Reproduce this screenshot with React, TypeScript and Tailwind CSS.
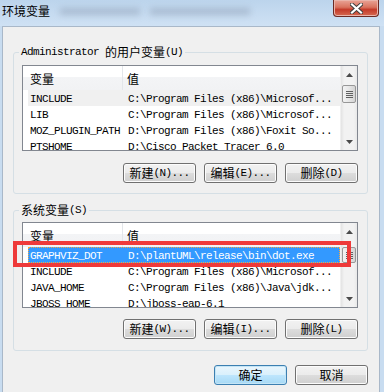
import React from "react";

const mono = "font-['Liberation_Mono',monospace] text-[11px] tracking-[-0.6px] whitespace-pre";
const cjk = "font-['Noto_Sans_CJK_SC',sans-serif] text-[12px]";

function Txt({ s }: { s: string }) {
    const runs = s.match(/[\x00-\x7f]+|[^\x00-\x7f]+/g) || [];
    return (
        <>
            {runs.map((r, i) => (
                <span key={i} className={/^[\x00-\x7f]/.test(r) ? mono : cjk}>{r}</span>
            ))}
        </>
    );
}

function Btn({ label, focus }: { label: string; focus?: boolean }) {
    return (
        <div
            className={`w-[73px] h-[20px] rounded-[3px] border flex items-center justify-center leading-none text-black ${focus
                ? "border-[#3c7fb1] bg-[linear-gradient(#eaf6fd_0%,#d9f0fc_50%,#bee6fd_50%,#a7d9f5_100%)] shadow-[inset_0_0_0_1px_#c4e5f6]"
                : "border-[#707070] bg-[linear-gradient(#f2f2f2_0%,#ebebeb_50%,#dddddd_50%,#cfcfcf_100%)] shadow-[inset_0_0_0_1px_#fcfcfc]"
                }`}
        >
            <Txt s={label} />
        </div>
    );
}

function Arrow({ down }: { down?: boolean }) {
    return (
        <div className="h-[17px] shrink-0 flex items-center justify-center">
            <svg width="7" height="4" viewBox="0 0 7 4">
                <path d={down ? "M0 0H7L3.5 4Z" : "M0 4H7L3.5 0Z"} fill="#4a4a4a" />
            </svg>
        </div>
    );
}

function ScrollBar({ gap, thumb }: { gap: number; thumb: number }) {
    return (
        <div className="w-[17px] h-full shrink-0 flex flex-col bg-[linear-gradient(90deg,#e3e3e3,#f2f2f2_20%,#f2f2f2_80%,#e8e8e8)] border-l border-[#f0f0f0]">
            <Arrow />
            <div style={{ height: gap }} className="shrink-0" />
            <div
                style={{ height: thumb }}
                className="shrink-0 mx-[1px] rounded-[2px] border border-[#979797] bg-[linear-gradient(90deg,#f3f3f3,#e6e6e6_50%,#d4d4d4)] flex flex-col items-center justify-center gap-[1px]"
            >
                <div className="w-[7px] h-[1px] bg-[#606060]" />
                <div className="w-[7px] h-[1px] bg-[#606060]" />
                <div className="w-[7px] h-[1px] bg-[#606060]" />
                <div className="w-[7px] h-[1px] bg-[#606060]" />
            </div>
            <div className="flex-1" />
            <Arrow down />
        </div>
    );
}

type Row = { name: string; value: string; sel?: boolean; inactive?: boolean };

function ListBox({ rows, gap, thumb }: { rows: Row[]; gap: number; thumb: number }) {
    return (
        <div className="w-[336px] h-[86px] border border-[#828790] bg-white flex overflow-hidden">
            <div className="flex-1 flex flex-col overflow-hidden">
                <div className="h-[24px] shrink-0 flex items-center leading-none bg-[linear-gradient(#ffffff_0%,#ffffff_45%,#f3f4f6_46%,#f1f2f4_100%)]">
                    <div className="w-[100px] h-full pl-[7px] pt-[2px] flex items-center border-r border-[#e3e6ea]">
                        <Txt s="变量" />
                    </div>
                    <div className="pl-[4px] pt-[2px]">
                        <Txt s="值" />
                    </div>
                </div>
                {rows.map((r) => (
                    <div key={r.name} className="h-[16px] shrink-0 flex pl-[5px]">
                        <div
                            className={`flex-1 flex items-center leading-none ${r.sel
                                ? "bg-[#3399ff] text-white outline-1 outline-dotted outline-[#f5a742] -outline-offset-1"
                                : r.inactive
                                    ? "bg-[#f0f0f0] text-black"
                                    : "text-black"
                                }`}
                        >
                            <div className="w-[95px] pl-[2px]">
                                <Txt s={r.name} />
                            </div>
                            <div className="pl-[5px] whitespace-nowrap">
                                <Txt s={r.value} />
                            </div>
                        </div>
                    </div>
                ))}
            </div>
            <ScrollBar gap={gap} thumb={thumb} />
        </div>
    );
}

const userRows: Row[] = [
    { name: "INCLUDE", value: "C:\\Program Files (x86)\\Microsof...", inactive: true },
    { name: "LIB", value: "C:\\Program Files (x86)\\Microsof..." },
    { name: "MOZ_PLUGIN_PATH", value: "D:\\Program Files (x86)\\Foxit So..." },
    { name: "PTSHOME", value: "D:\\Cisco Packet Tracer 6.0" },
];

const sysRows: Row[] = [
    { name: "GRAPHVIZ_DOT", value: "D:\\plantUML\\release\\bin\\dot.exe", sel: true },
    { name: "INCLUDE", value: "C:\\Program Files (x86)\\Microsof..." },
    { name: "JAVA_HOME", value: "C:\\Program Files (x86)\\Java\\jdk..." },
    { name: "JBOSS_HOME", value: "D:\\jboss-eap-6.1" },
];

export default function App() {
    return (
        <div className="w-[384px] h-[392px] overflow-hidden flex flex-col bg-[#c8dcf0] text-black text-[12px] leading-none font-['Noto_Sans_CJK_SC',sans-serif]">
            {/* title bar */}
            <div className="h-[26px] shrink-0 flex items-start bg-[linear-gradient(#bcd4ec,#cfe1f4)]">
                <div className="pl-[2px] pt-[4px] h-[18px] flex items-center text-black">
                    <Txt s="环境变量" />
                </div>
                <div className="ml-[10px] mt-[8px] w-[80px] h-[7px] bg-[#7f8fa6]/40 blur-[3px]" />
                <div className="ml-[10px] mt-[8px] w-[100px] h-[7px] bg-[#7f8fa6]/40 blur-[3px]" />
                <div className="flex-1" />
                <div className="mr-[5px] w-[46px] h-[17px] rounded-b-[4px] border border-t-0 border-[#6b2a24] bg-[linear-gradient(#e9a497_0%,#d9735f_45%,#c43b2a_60%,#d66a52_100%)] flex items-center justify-center shadow-[inset_0_0_0_1px_#eab4aa]">
                    <svg width="13" height="11" viewBox="0 0 13 11">
                        <path d="M2 1.5L11 9.5M11 1.5L2 9.5" stroke="#3d3d3d" strokeWidth="4" strokeLinecap="square" />
                        <path d="M2 1.5L11 9.5M11 1.5L2 9.5" stroke="#ffffff" strokeWidth="2.2" strokeLinecap="square" />
                    </svg>
                </div>
            </div>

            {/* client area */}
            <div className="relative flex-1 ml-[2px] mr-[4px] border border-b-0 border-[#a9b8c9] bg-[#f0f0f0] flex flex-col pl-[10px]">
                <fieldset className="mt-[18px] w-[355px] border border-[#d5dfe5] rounded-[3px] px-[8px] pb-[10px]">
                    <legend className="ml-[-3px] px-[2px] h-[14px] flex items-center">
                        <Txt s="Administrator 的用户变量(U)" />
                    </legend>
                    <div className="mt-[6px]">
                        <ListBox rows={userRows} gap={2} thumb={18} />
                    </div>
                    <div className="mt-[12px] flex justify-end gap-[8px] pr-[1px]">
                        <Btn label="新建(N)..." />
                        <Btn label="编辑(E)..." />
                        <Btn label="删除(D)" />
                    </div>
                </fieldset>

                <fieldset className="mt-[9px] w-[355px] border border-[#d5dfe5] rounded-[3px] px-[8px] pb-[11px]">
                    <legend className="ml-[-3px] px-[2px] h-[14px] flex items-center">
                        <Txt s="系统变量(S)" />
                    </legend>
                    <div className="mt-[5px]">
                        <ListBox rows={sysRows} gap={7} thumb={16} />
                    </div>
                    <div className="mt-[11px] flex justify-end gap-[8px] pr-[1px]">
                        <Btn label="新建(W)..." />
                        <Btn label="编辑(I)..." />
                        <Btn label="删除(L)" />
                    </div>
                </fieldset>

                <div className="mt-[14px] w-[355px] flex justify-end gap-[8px]">
                    <Btn label="确定" focus />
                    <Btn label="取消" />
                </div>

                {/* red annotation box */}
                <div className="absolute left-[10px] top-[214px] w-[338px] h-[26px] border-[4px] border-[#ee3a3a]" />
            </div>
        </div>
    );
}
